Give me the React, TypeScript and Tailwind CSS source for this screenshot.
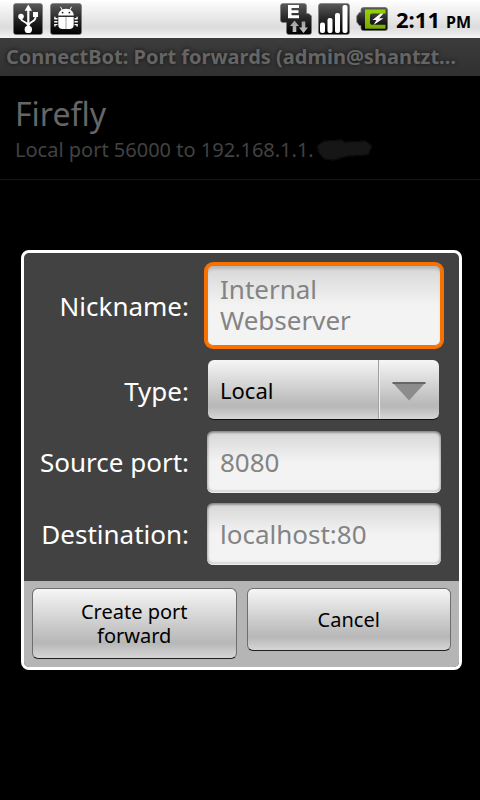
import React from "react";

const fieldBox =
  "block w-full rounded-md bg-linear-to-b from-[#d6d6d6] via-[#f3f3f3] via-50% to-[#f3f3f3] px-[13px] text-[26px] text-black placeholder:text-[#848484] placeholder:opacity-100 outline-none";
const fieldInset =
  "shadow-[inset_0_2px_2px_rgba(0,0,0,0.3),inset_2px_0_2px_rgba(0,0,0,0.12),inset_-2px_0_2px_rgba(0,0,0,0.12),inset_0_-1px_0_#ffffff,inset_0_-3px_2px_rgba(0,0,0,0.1)]";
const labelText = "text-right text-[26px] leading-8 text-white";
const glossy =
  "bg-linear-to-b from-[#f6f6f6] via-[#b7b7b7] via-78% to-[#d6d6d6]";
const dialogButton =
  "min-h-[63px] flex-1 basis-0 rounded-md border border-[#6e6e6e] border-b-[#202020] px-9 pt-[11px] pb-[10px] text-[20px] leading-6 text-black";

function IconDefs() {
  return (
    <svg width="0" height="0" className="absolute" aria-hidden="true">
      <defs>
        <linearGradient id="tile" x1="0" y1="0" x2="0" y2="1">
          <stop offset="0" stopColor="#5a5a5a" />
          <stop offset="0.5" stopColor="#262626" />
          <stop offset="1" stopColor="#000" />
        </linearGradient>
        <linearGradient id="greyArrow" x1="0" y1="0" x2="0" y2="1">
          <stop offset="0" stopColor="#989898" />
          <stop offset="1" stopColor="#c8c8c8" />
        </linearGradient>
        <linearGradient id="charge" x1="0" y1="0" x2="0" y2="1">
          <stop offset="0" stopColor="#96d400" />
          <stop offset="1" stopColor="#7aa800" />
        </linearGradient>
      </defs>
    </svg>
  );
}

function UsbIcon() {
  return (
    <svg width="30" height="32" viewBox="0 0 30 32" aria-hidden="true">
      <rect x="0.5" y="0.5" width="29" height="31" rx="2.5" fill="url(#tile)" stroke="#777" strokeOpacity="0.6" />
      <path d="M15.3 1.5 L19 7.8 H16.4 V24 H14.2 V7.8 H11.6 Z" fill="#fff" />
      <path d="M8 14 V15.5 C8 19 14.8 18.5 14.8 22.5 M22.5 12 V14.5 C22.5 19 15.8 18.5 15.8 22.5" fill="none" stroke="#fff" strokeWidth="1.8" />
      <circle cx="8" cy="13.6" r="2.8" fill="#fff" />
      <rect x="20" y="9" width="5" height="5" fill="#fff" />
      <circle cx="15.3" cy="26.4" r="3.7" fill="#fff" />
    </svg>
  );
}

function BugIcon() {
  return (
    <svg width="32" height="32" viewBox="0 0 32 32" aria-hidden="true">
      <rect x="0.5" y="0.5" width="31" height="31" rx="2.5" fill="url(#tile)" stroke="#777" strokeOpacity="0.6" />
      <path d="M8.3 12.6 C8.3 8.6 11.5 5.8 16 5.8 C20.5 5.8 23.7 8.6 23.7 12.6 Z" fill="#fff" />
      <path d="M10.5 3.8 L12.3 7 M21.5 3.8 L19.7 7" stroke="#fff" strokeWidth="1" />
      <circle cx="12.6" cy="9.6" r="0.9" fill="#222" />
      <circle cx="19.4" cy="9.6" r="0.9" fill="#222" />
      <path d="M8.3 14 H23.7 V22 C23.7 24.5 22 26 19.5 26 H12.5 C10 26 8.3 24.5 8.3 22 Z" fill="#fff" />
      <path d="M16 14 V26" stroke="#bdbdbd" strokeWidth="1.4" />
      <path d="M4.9 13.8 V15.8 H7.5 M4.2 18.8 H7.5 M4.9 23.5 V21.6 H7.5 M27.1 13.8 V15.8 H24.5 M27.8 18.8 H24.5 M27.1 23.5 V21.6 H24.5" fill="none" stroke="#fff" strokeWidth="1.4" />
    </svg>
  );
}

function EdgeIcon() {
  return (
    <svg width="32" height="32" viewBox="0 0 32 32" aria-hidden="true">
      <path d="M3 0.5 H24 Q26.5 0.5 26.5 3 V10.5 H28 Q29.5 10.5 31.5 13 V29 Q31.5 31.5 29 31.5 H9 Q6.5 31.5 6.5 29 V19.5 H3 Q0.5 19.5 0.5 17 V3 Q0.5 0.5 3 0.5 Z" fill="url(#tile)" stroke="#777" strokeOpacity="0.6" />
      <path d="M8 2 H19 V5 H11.5 V7.2 H18.5 V10 H11.5 V12.3 H19 V15.2 H8 Z" fill="#fff" />
      <path d="M14.5 17.5 L19 23 H16.3 V29 H12.7 V23 H10 Z M23.5 30 L28 24.5 H25.3 V18.5 H21.7 V24.5 H19 Z" fill="url(#greyArrow)" />
    </svg>
  );
}

function SignalIcon() {
  return (
    <svg width="32" height="32" viewBox="0 0 32 32" aria-hidden="true">
      <rect x="0.5" y="0.5" width="31" height="31" rx="2.5" fill="url(#tile)" stroke="#777" strokeOpacity="0.6" />
      <rect x="2" y="19.5" width="5" height="10.5" rx="2" fill="#fff" />
      <rect x="9.5" y="15" width="5" height="15" rx="2" fill="#fff" />
      <rect x="17" y="10" width="5" height="20" rx="2" fill="#fff" />
      <rect x="24.5" y="2" width="5" height="28" rx="2" fill="#fff" />
    </svg>
  );
}

function BatteryIcon() {
  return (
    <svg width="32" height="32" viewBox="0 0 32 32" aria-hidden="true">
      <path d="M7.5 4.5 H29 Q31.5 4.5 31.5 7 V25 Q31.5 27.5 29 27.5 H7.5 Q5 27.5 5 25 V22.5 H3.5 L0.8 19 V13 L3.5 9.5 H5 V7 Q5 4.5 7.5 4.5 Z" fill="url(#tile)" stroke="#666" strokeOpacity="0.7" />
      <path d="M9 6.5 H29.5 V10.5 H16 Q14 10.5 14 12.5 V19.8 Q14 21.8 16 21.8 H29.5 V25.8 H9 Z" fill="url(#charge)" />
      <path d="M24.5 10.5 L16.5 17 H20.5 L17.5 22 L27.5 15.2 H23 L27.5 10.5 Z" fill="#fff" />
    </svg>
  );
}

function StatusBar() {
  return (
    <header className="flex h-[38px] items-center bg-linear-to-b from-white via-[#dcdcdc] via-72% to-[#f4f4f4] pl-[13px] pr-[9px]">
      <div className="flex gap-[7px]">
        <UsbIcon />
        <BugIcon />
      </div>
      <div className="ml-auto flex gap-[6px]">
        <EdgeIcon />
        <SignalIcon />
        <BatteryIcon />
      </div>
      <time className="ml-2 flex items-baseline gap-[6px] font-bold text-black">
        <span className="text-[22px] leading-8">2:11</span>
        <span className="text-[16px]">PM</span>
      </time>
    </header>
  );
}

function PortForwardDialog() {
  return (
    <form
      role="dialog"
      aria-label="Edit port forward"
      onSubmit={(e) => e.preventDefault()}
      className="w-full overflow-hidden rounded-lg border-[3px] border-white bg-[#424242]"
    >
      <div className="grid grid-cols-[165px_1fr] items-center gap-x-[18px] gap-y-[10px] pt-3 pr-[18px] pb-4">
        <label htmlFor="nickname" className={`${labelText} pb-1`}>Nickname:</label>
        <div className="pb-1">
          <textarea
            id="nickname"
            rows={2}
            placeholder="Internal Webserver"
            className={`${fieldBox} h-[81px] resize-none overflow-hidden py-[9px] leading-[31px] shadow-[inset_0_0_0_1px_#f87000,inset_0_4px_3px_rgba(0,0,0,0.15)] ring-3 ring-[#f87000]`}
          />
        </div>

        <label htmlFor="type" className={labelText}>Type:</label>
        <div className="relative mr-[2px] ml-px pb-px">
          <select
            id="type"
            defaultValue="local"
            className={`block h-[60px] w-full appearance-none rounded-md border-b border-[#101010] pt-px pl-3 text-[22px] text-black outline-none ${glossy}`}
          >
            <option value="local">Local</option>
            <option value="remote">Remote</option>
            <option value="dynamic">Dynamic (SOCKS)</option>
          </select>
          <div className="pointer-events-none absolute top-0 right-0 flex h-[59px] w-[61px] items-center justify-center border-l border-[#a0a0a0] shadow-[inset_1px_0_0_#f0f0f0]">
            <svg width="34" height="19" viewBox="0 0 34 19" aria-hidden="true" className="mt-1">
              <path d="M1 1 H33 L17 18.5 Z" fill="#8c8c8c" />
              <path d="M0.5 1 H33.5" stroke="#666" strokeWidth="2" />
            </svg>
          </div>
        </div>

        <label htmlFor="source" className={labelText}>Source port:</label>
        <input id="source" type="text" placeholder="8080" className={`${fieldBox} ${fieldInset} h-[62px]`} />

        <label htmlFor="destination" className={labelText}>Destination:</label>
        <input id="destination" type="text" placeholder="localhost:80" className={`${fieldBox} ${fieldInset} h-[62px]`} />
      </div>

      <div className="flex items-start gap-[10px] bg-[#b5b5b5] px-2 pt-[7px] pb-2">
        <button type="submit" className={`${dialogButton} ${glossy}`}>
          Create port forward
        </button>
        <button type="button" className={`${dialogButton} ${glossy}`}>Cancel</button>
      </div>
    </form>
  );
}

export default function App() {
  return (
    <div className="relative min-h-screen bg-black font-['Noto_Sans',sans-serif]">
      <IconDefs />
      <StatusBar />
      <h1 className="h-[38px] overflow-hidden bg-linear-to-b from-[#3c3c3c] to-[#303030] px-[6px] text-[20px] leading-[37px] font-bold whitespace-nowrap text-[#656565] [text-shadow:0_0_4px_#101010]">
        ConnectBot: Port forwards (admin@shantzt…
      </h1>
      <main>
        <ul>
          <li className="h-[104px] border-b border-[#151515] px-[15px] pt-4">
            <p className="text-[32px] leading-[44px] text-[#666666]">Firefly</p>
            <p className="flex items-center text-[20px] leading-7 text-[#424242]">
              Local port 56000 to 192.168.1.1.
              <svg width="60" height="24" viewBox="0 0 60 24" aria-hidden="true">
                <defs>
                  <filter id="smear"><feGaussianBlur stdDeviation="1.2" /></filter>
                </defs>
                <path d="M3 8 L10 3 L28 2 L30 4 L52 3 L58 8 L54 17 L34 18 L20 22 L10 21 L5 15 Z" fill="#181818" filter="url(#smear)" />
              </svg>
            </p>
          </li>
        </ul>
      </main>
      <div className="absolute inset-0 flex items-center pt-[120px] pr-[18px] pl-[21px]">
        <PortForwardDialog />
      </div>
    </div>
  );
}
